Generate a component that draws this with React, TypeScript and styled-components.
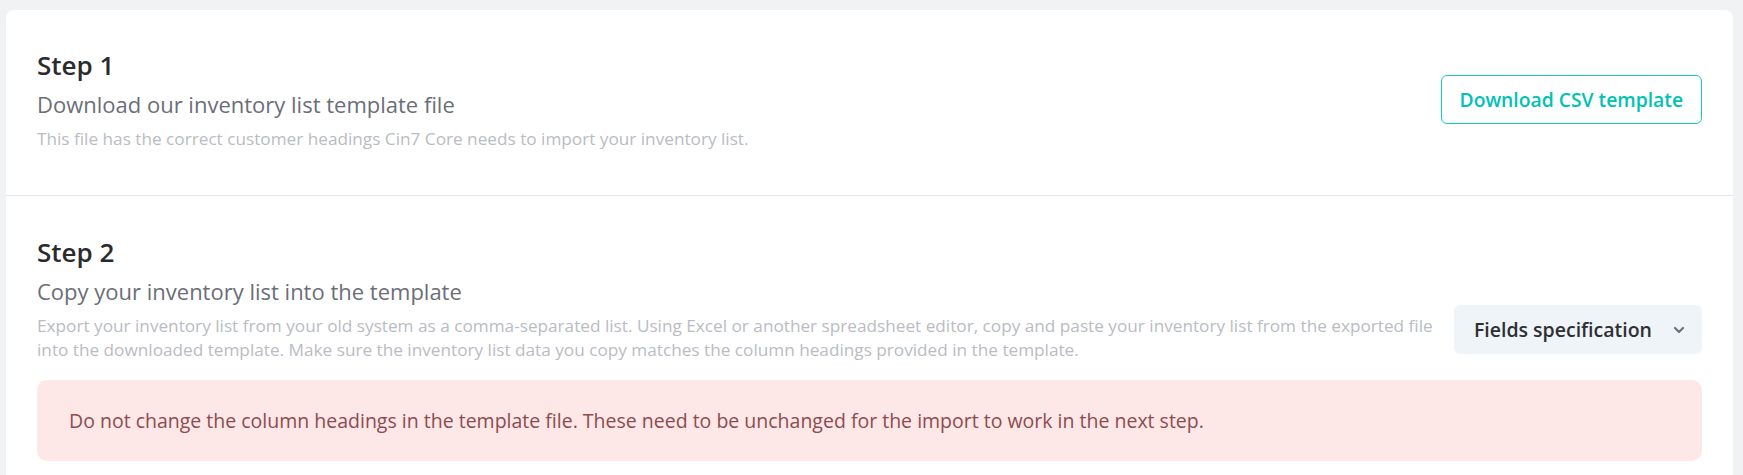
import React from 'react';
import styled, { createGlobalStyle } from 'styled-components';

const GlobalStyle = createGlobalStyle`
  html, body {
    margin: 0;
    padding: 0;
    background: #f1f2f4;
    font-family: 'Open Sans', 'Noto Sans', sans-serif;
  }
  * {
    box-sizing: border-box;
  }
`;

const Page = styled.div`
  padding: 10px 10px 0 6px;
  height: 475px;
  overflow: hidden;
`;

const Card = styled.div`
  background: #ffffff;
  border-radius: 8px;
  min-height: 600px;
`;

const Section = styled.section<{ divider?: boolean }>`
  padding: ${({ divider }) => (divider ? '38px 31px 44px' : '39px 31px 42px')};
  border-bottom: ${({ divider }) => (divider ? '1px solid #e3e4e7' : 'none')};
`;

const Row = styled.div<{ align?: string }>`
  display: flex;
  align-items: ${({ align }) => align || 'center'};
  justify-content: space-between;
  gap: 4px;
`;

const TextCol = styled.div`
  display: flex;
  flex-direction: column;
  min-width: 0;
  flex: 1;
`;

const StepTitle = styled.h2`
  margin: 0 0 7px;
  font-size: 26px;
  line-height: 34px;
  font-weight: 600;
  color: #2b2b2d;
`;

const StepSubtitle = styled.div`
  font-size: 22px;
  line-height: 30px;
  color: #6b6e77;
`;

const StepText = styled.p`
  margin: 8px 0 0;
  font-size: 17.2px;
  line-height: 24px;
  color: #b9bcc3;
`;

const OutlineButton = styled.button`
  flex: none;
  height: 49px;
  padding: 0 18px;
  border: 1px solid #14cbbd;
  border-radius: 6px;
  background: #ffffff;
  color: #00c2b2;
  font-family: inherit;
  font-size: 19.3px;
  font-weight: 600;
  cursor: pointer;
`;

const DropdownButton = styled.button`
  flex: none;
  display: flex;
  align-items: center;
  gap: 21px;
  height: 49px;
  margin-bottom: 8px;
  padding: 0 17px 0 20px;
  border: none;
  border-radius: 6px;
  background: #eff4f9;
  color: #2e2f33;
  font-family: inherit;
  font-size: 19.5px;
  font-weight: 600;
  cursor: pointer;
`;

const Alert = styled.div`
  margin-top: 18px;
  padding: 27px 32px;
  border-radius: 10px;
  background: #fde7e7;
  color: #8c4c4f;
  font-size: 19.5px;
  line-height: 27px;
`;

function Chevron() {
  return (
    <svg width="12" height="8" viewBox="0 0 12 8" fill="none">
      <path d="M2 2l4 4 4-4" stroke="#6e7280" strokeWidth="2.2" strokeLinecap="round" strokeLinejoin="round" />
    </svg>
  );
}

function App() {
  return (
    <Page>
      <GlobalStyle />
      <Card>
        <Section divider>
          <Row>
            <TextCol>
              <StepTitle>Step 1</StepTitle>
              <StepSubtitle>Download our inventory list template file</StepSubtitle>
              <StepText>This file has the correct customer headings Cin7 Core needs to import your inventory list.</StepText>
            </TextCol>
            <OutlineButton>Download CSV template</OutlineButton>
          </Row>
        </Section>
        <Section>
          <StepTitle>Step 2</StepTitle>
          <Row align="flex-end">
            <TextCol>
              <StepSubtitle>Copy your inventory list into the template</StepSubtitle>
              <StepText>
                Export your inventory list from your old system as a comma-separated list. Using Excel or another spreadsheet
                editor, copy and paste your inventory list from the exported file into the downloaded template. Make sure the
                inventory list data you copy matches the column headings provided in the template.
              </StepText>
            </TextCol>
            <DropdownButton>
              Fields specification
              <Chevron />
            </DropdownButton>
          </Row>
          <Alert>
            Do not change the column headings in the template file. These need to be unchanged for the import to work in the
            next step.
          </Alert>
        </Section>
      </Card>
    </Page>
  );
}

export default App;
